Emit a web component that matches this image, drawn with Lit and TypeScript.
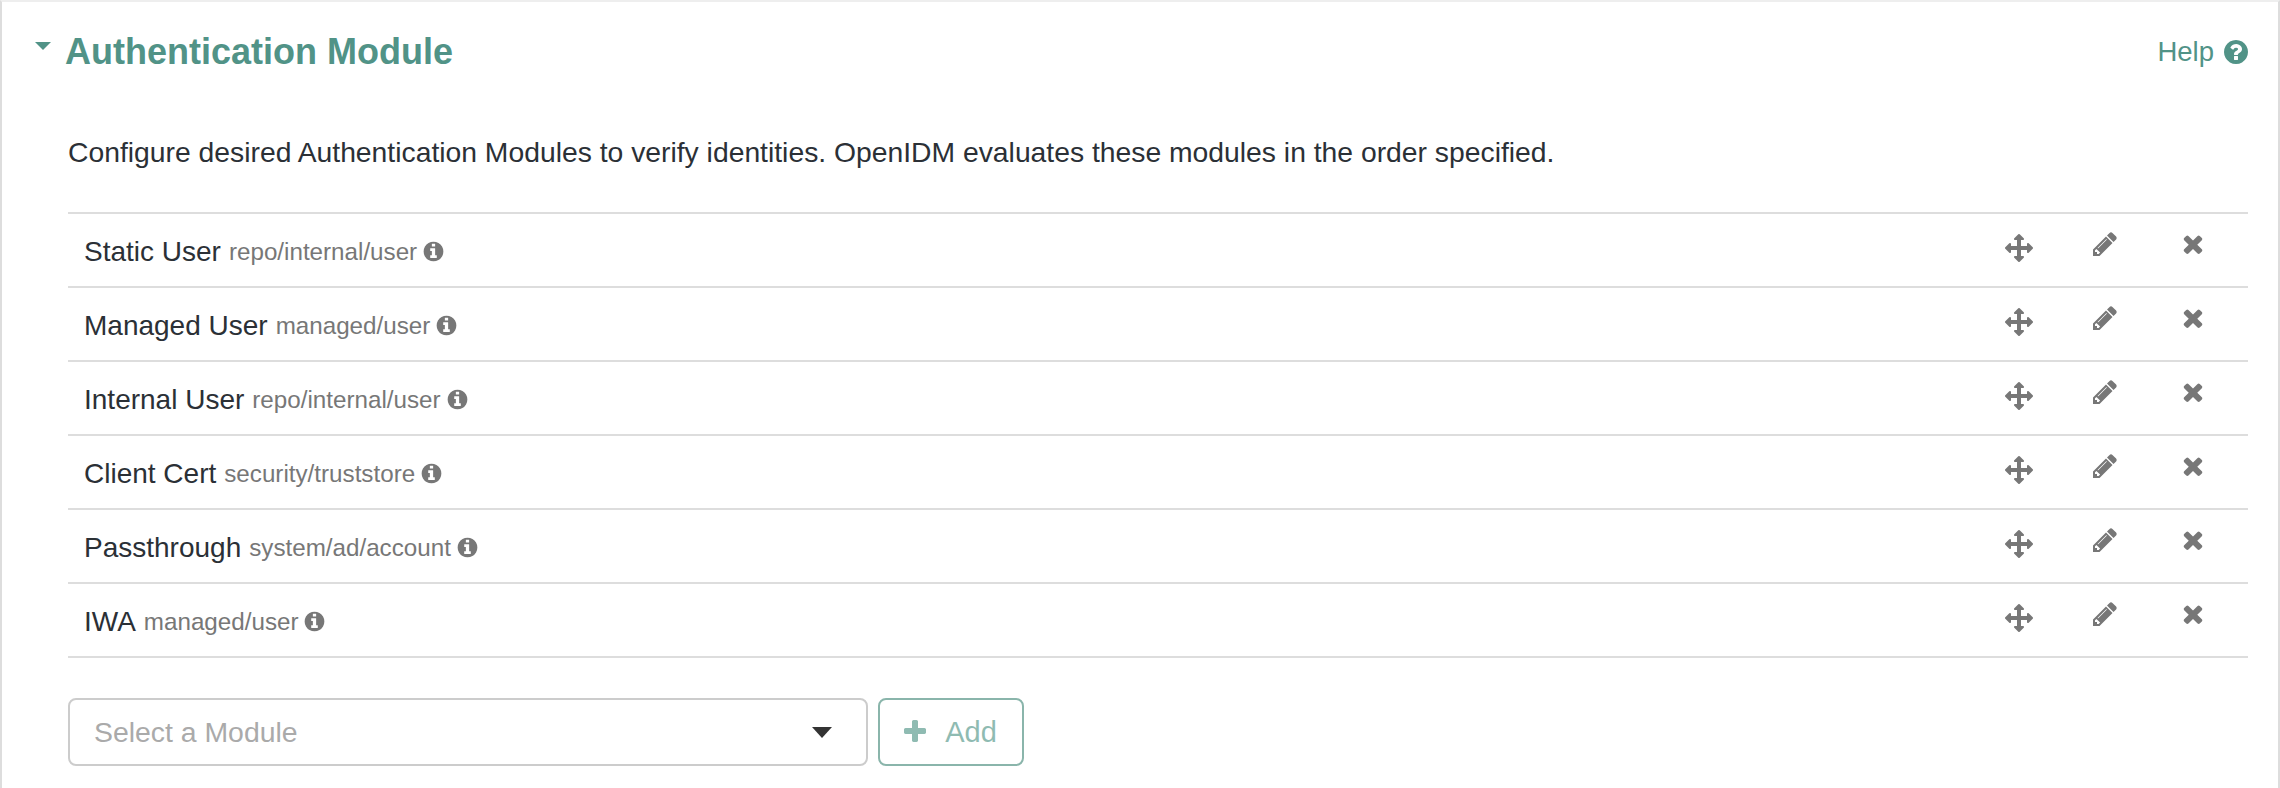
import {LitElement, html, css, svg} from 'lit';
import {customElement} from 'lit/decorators.js';

const ICONS: Record<string, string> = {
  move: 'M1792 896q0 26-19 45l-256 256q-19 19-45 19t-45-19-19-45v-128h-384v384h128q26 0 45 19t19 45-19 45l-256 256q-19 19-45 19t-45-19l-256-256q-19-19-19-45t19-45 45-19h128v-384h-384v128q0 26-19 45t-45 19-45-19l-256-256q-19-19-19-45t19-45l256-256q19-19 45-19t45 19 19 45v128h384v-384h-128q-26 0-45-19t-19-45 19-45l256-256q19-19 45-19t45 19l256 256q19 19 19 45t-19 45-45 19h-128v384h384v-128q0-26 19-45t45-19 45 19l256 256q19 19 19 45z',
  pencil: 'M491 1536l91-91-235-235-91 91v107h128v128h107zm523-928q0-22-22-22-10 0-17 7l-542 542q-7 7-7 17 0 22 22 22 10 0 17-7l542-542q7-7 7-17zm-54-192l416 416-832 832h-416v-416zm683 96q0 53-37 90l-166 166-416-416 166-165q36-38 90-38 53 0 91 38l235 234q37 39 37 91z',
  times: 'M1298 1242q0 40-28 68l-136 136q-28 28-68 28t-68-28l-294-294-294 294q-28 28-68 28t-68-28l-136-136q-28-28-28-68t28-68l294-294-294-294q-28-28-28-68t28-68l136-136q28-28 68-28t68 28l294 294 294-294q28-28 68-28t68 28l136 136q28 28 28 68t-28 68l-294 294 294 294q28 28 28 68z',
  info: 'M1152 1376v-160q0-14-9-23t-23-9h-96v-512q0-14-9-23t-23-9h-320q-14 0-23 9t-9 23v160q0 14 9 23t23 9h96v320h-96q-14 0-23 9t-9 23v160q0 14 9 23t23 9h448q14 0 23-9t9-23zm-128-896v-160q0-14-9-23t-23-9h-192q-14 0-23 9t-9 23v160q0 14 9 23t23 9h192q14 0 23-9t9-23zm640 416q0 209-103 385.5t-279.5 279.5-385.5 103-385.5-103-279.5-279.5-103-385.5 103-385.5 279.5-279.5 385.5-103 385.5 103 279.5 279.5 103 385.5z',
  help: 'M1024 1376v-192q0-14-9-23t-23-9h-192q-14 0-23 9t-9 23v192q0 14 9 23t23 9h192q14 0 23-9t9-23zm256-672q0-88-55.5-163t-138.5-116-170-41q-243 0-371 213-15 24 8 42l132 100q7 6 19 6 16 0 25-12 53-68 86-92 34-24 86-24 48 0 85.5 26t37.5 59q0 38-20 61t-68 45q-63 28-115.5 86.5t-52.5 125.5v36q0 14 9 23t23 9h192q14 0 23-9t9-23q0-19 21.5-49.5t54.5-49.5q32-18 49-28.5t46-35 44.5-48 28-60.5 12.5-81zm384 192q0 209-103 385.5t-279.5 279.5-385.5 103-385.5-103-279.5-279.5-103-385.5 103-385.5 279.5-279.5 385.5-103 385.5 103 279.5 279.5 103 385.5z',
  plus: 'M1600 736v192q0 40-28 68t-68 28h-416v416q0 40-28 68t-68 28h-192q-40 0-68-28t-28-68v-416h-416q-40 0-68-28t-28-68v-192q0-40 28-68t68-28h416v-416q0-40 28-68t68-28h192q40 0 68 28t28 68v416h416q40 0 68 28t28 68z',
};

const icon = (name: string, cls: string) => html`<svg class="icon ${cls}" viewBox="0 0 1792 1792" fill="currentColor">${svg`<path d=${ICONS[name]}></path>`}</svg>`;

const MODULES = [
  {name: 'Static User', path: 'repo/internal/user'},
  {name: 'Managed User', path: 'managed/user'},
  {name: 'Internal User', path: 'repo/internal/user'},
  {name: 'Client Cert', path: 'security/truststore'},
  {name: 'Passthrough', path: 'system/ad/account'},
  {name: 'IWA', path: 'managed/user'},
];

@customElement('app-root')
export class AppRoot extends LitElement {
  static styles = css`
    :host {
      display: block;
      width: 2280px;
      height: 788px;
      overflow: hidden;
      font-family: "Liberation Sans", Arial, sans-serif;
      color: #2b3036;
      background: #fff;
    }
    .panel {
      box-sizing: border-box;
      height: 788px;
      border: 2px solid #ddd;
      border-top-color: #eee;
      border-bottom: 0;
      padding: 0 30px 0 66px;
    }
    .heading {
      display: flex;
      justify-content: space-between;
      align-items: center;
      height: 100px;
      color: #519387;
    }
    .heading h2 {
      position: relative;
      margin: 0 0 0 -3px;
      font-size: 36px;
      font-weight: 700;
      line-height: 100px;
    }
    .caret {
      position: absolute;
      left: -30px;
      top: 40px;
      width: 0;
      height: 0;
      border: 8px solid transparent;
      border-top-color: #519387;
      border-bottom: 0;
    }
    .help {
      display: flex;
      align-items: center;
      gap: 8px;
      font-size: 27.5px;
    }
    .help .icon { width: 28px; height: 28px; margin-right: -2px; }
    .desc {
      margin: 0;
      font-size: 28.3px;
      line-height: 36px;
      padding-top: 32px;
      height: 76px;
      box-sizing: border-box;
    }
    .list {
      margin-top: 34px;
      border-top: 2px solid #ddd;
    }
    .row {
      display: flex;
      align-items: center;
      height: 72px;
      padding-left: 16px;
      border-bottom: 2px solid #ddd;
    }
    .label {
      display: flex;
      align-items: center;
      padding-top: 3px;
    }
    .name { font-size: 28px; }
    .path { font-size: 24.2px; color: #777; margin-left: 8px; }
    .info { width: 23px; height: 23px; color: #777; margin-left: 5px; }
    .actions {
      margin: 0 0 8px auto;
      padding-right: 38px;
      height: 32px;
      display: flex;
      align-items: flex-start;
      color: #777;
    }
    .act {
      display: flex;
      margin-left: 58px;
    }
    .act .icon { width: 28px; height: 28px; }
    .act.move { margin-top: 4px; }
    .act.remove { margin-left: 63px; margin-top: 1px; }
    .picker {
      display: flex;
      gap: 10px;
      margin-top: 40px;
    }
    .select {
      box-sizing: border-box;
      width: 800px;
      height: 68px;
      display: flex;
      align-items: center;
      justify-content: space-between;
      padding: 0 34px 0 24px;
      border: 2px solid #ccc;
      border-radius: 8px;
      font-size: 28.4px;
      color: #aaa;
    }
    .arrow {
      width: 0;
      height: 0;
      border: 10px solid transparent;
      border-top: 11px solid #333;
      border-bottom: 0;
    }
    .add {
      box-sizing: border-box;
      width: 146px;
      height: 68px;
      display: flex;
      align-items: center;
      justify-content: center;
      gap: 16px;
      padding-right: 4px;
      border: 2px solid #8ab5ab;
      border-radius: 8px;
      font-size: 29px;
      color: #8fbbb2;
    }
    .add .icon { width: 28px; height: 28px; }
  `;

  render() {
    return html`
      <div class="panel">
        <div class="heading">
          <h2><span class="caret"></span>Authentication Module</h2>
          <span class="help">Help ${icon('help', '')}</span>
        </div>
        <p class="desc">Configure desired Authentication Modules to verify identities. OpenIDM evaluates these modules in the order specified.</p>
        <div class="list">
          ${MODULES.map((m) => html`
            <div class="row">
              <div class="label">
                <span class="name">${m.name}</span>
                <span class="path">${m.path}</span>
                ${icon('info', 'info')}
              </div>
              <div class="actions">
                <span class="act move">${icon('move', '')}</span>
                <span class="act edit">${icon('pencil', '')}</span>
                <span class="act remove">${icon('times', '')}</span>
              </div>
            </div>
          `)}
        </div>
        <div class="picker">
          <div class="select">Select a Module<span class="arrow"></span></div>
          <div class="add">${icon('plus', '')}Add</div>
        </div>
      </div>
    `;
  }
}
